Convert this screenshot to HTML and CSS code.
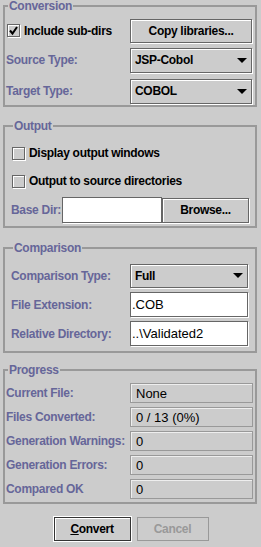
FILE: index.html
```html
<!DOCTYPE html>
<html>

<head>
    <title>Conversion</title>
    <meta charset="UTF-8">
    <link rel="stylesheet" href="styles.css">
</head>

<body>
    <div class="group conv">
        <div class="title">Conversion</div>
        <div class="rows">
            <div class="row r25">
                <label class="check"><span class="box"><svg width="11" height="11" viewBox="0 0 11 11">
                            <path d="M2 5.5 L4.5 8.5 L9 2" fill="none" stroke="#000" stroke-width="2" />
                        </svg></span>Include sub-dirs</label>
                <div class="btn">Copy libraries...</div>
            </div>
            <div class="row r26 g4">
                <span class="lbl">Source Type:</span>
                <div class="combo"><span>JSP-Cobol</span><i class="arrow"></i></div>
            </div>
            <div class="row r26 g5">
                <span class="lbl">Target Type:</span>
                <div class="combo"><span>COBOL</span><i class="arrow"></i></div>
            </div>
        </div>
    </div>

    <div class="group out">
        <div class="title">Output</div>
        <div class="rows">
            <label class="check r20"><span class="box"></span>Display output windows</label>
            <label class="check r20 g8"><span class="box"></span>Output to source directories</label>
            <div class="base r26 g6">
                <span class="lbl">Base Dir:</span>
                <div class="field"></div>
                <div class="btn">Browse...</div>
            </div>
        </div>
    </div>

    <div class="group cmp">
        <div class="title">Comparison</div>
        <div class="rows">
            <div class="row r25">
                <span class="lbl">Comparison Type:</span>
                <div class="combo"><span>Full</span><i class="arrow"></i></div>
            </div>
            <div class="row r25 g4">
                <span class="lbl">File Extension:</span>
                <div class="field">.COB</div>
            </div>
            <div class="row r25 g4">
                <span class="lbl">Relative Directory:</span>
                <div class="field">..\Validated2</div>
            </div>
        </div>
    </div>

    <div class="group prog">
        <div class="title">Progress</div>
        <div class="rows">
            <div class="row r20">
                <span class="lbl">Current File:</span>
                <div class="ro">None</div>
            </div>
            <div class="row r20 g4">
                <span class="lbl">Files Converted:</span>
                <div class="ro">0 / 13 (0%)</div>
            </div>
            <div class="row r20 g4">
                <span class="lbl">Generation Warnings:</span>
                <div class="ro">0</div>
            </div>
            <div class="row r20 g4">
                <span class="lbl">Generation Errors:</span>
                <div class="ro">0</div>
            </div>
            <div class="row r20 g4">
                <span class="lbl">Compared OK</span>
                <div class="ro">0</div>
            </div>
        </div>
    </div>

    <div class="actions">
        <div class="btn default"><u>C</u>onvert</div>
        <div class="btn off">Cancel</div>
    </div>
</body>

</html>
```

FILE: styles.css
```css
body {
    margin: 0;
    background: #cccccc;
    font-family: "Liberation Sans", Arial, sans-serif;
    font-size: 12px;
    font-weight: bold;
    /* Swing's Dialog font runs a little narrower. */
    letter-spacing: -0.3px;
    color: #000;
    width: 261px;
    height: 547px;
    overflow: hidden;
}

/* Titled border panels */
.group {
    box-sizing: border-box;
    width: 254px;
    margin-left: 3px;
    border: 2px solid #999999;
}

.title {
    width: fit-content;
    margin: -7px 0 0 2px;
    padding: 0 1px;
    height: 12px;
    line-height: 12px;
    background: #cccccc;
    color: #666699;
}

.conv {
    margin-top: 5px;
    padding: 0 3px 1px 1px;
}

.out {
    margin-top: 18px;
    padding: 0 7px 3px 6px;
}

.cmp {
    margin-top: 19px;
    padding: 0 7px 5px 6px;
}

.prog {
    margin-top: 16px;
    padding: 0 2px 3px 1px;
}

.conv .rows { margin-top: 6px; }
.out .rows { margin-top: 11px; }
.cmp .rows { margin-top: 9px; }
.prog .rows { margin-top: 7px; }

.rows {
    display: flex;
    flex-direction: column;
}

.row {
    display: grid;
    grid-template-columns: 1fr 122px;
    align-items: center;
}

.cmp .row { grid-template-columns: 1fr 118px; }
.prog .row { grid-template-columns: 1fr 123px; }

.r20 { height: 20px; }
.r25 { height: 25px; }
.r26 { height: 26px; }
.g4 { margin-top: 4px; }
.g5 { margin-top: 5px; }
.g6 { margin-top: 6px; }
.g8 { margin-top: 8px; }

.lbl {
    color: #666699;
    white-space: nowrap;
}

/* Metal look checkbox */
.check {
    display: flex;
    align-items: center;
    margin-left: 1px;
}

.box {
    box-sizing: border-box;
    width: 13px;
    height: 13px;
    margin-right: 4px;
    border: 1px solid #666666;
    box-shadow: inset 1px 1px 0 #ffffff, 1px 1px 0 #ffffff;
    display: flex;
}

/* Buttons and combos share the flush 3D border */
.btn,
.combo,
.field {
    box-sizing: border-box;
    height: 100%;
    border: 1px solid #666666;
    box-shadow: inset 1px 1px 0 #ffffff, 1px 1px 0 #ffffff;
}

.btn {
    display: flex;
    align-items: center;
    justify-content: center;
    height: calc(100% - 1px);
}

.combo {
    display: flex;
    align-items: center;
    justify-content: space-between;
    padding: 0 4px 0 4px;
    height: calc(100% - 1px);
}

.arrow {
    width: 0;
    height: 0;
    border-left: 5px solid transparent;
    border-right: 5px solid transparent;
    border-top: 5px solid #000;
}

.field {
    background: #ffffff;
    font-weight: normal;
    letter-spacing: 0;
    display: flex;
    align-items: center;
    padding-left: 1px;
    font-size: 13px;
}

.base {
    display: grid;
    grid-template-columns: 51px 100px 87px;
    align-items: center;
}

.ro {
    box-sizing: border-box;
    height: 100%;
    border: 1px solid #999999;
    box-shadow: inset 1px 1px 0 #eeeeee;
    font-weight: normal;
    letter-spacing: 0;
    font-size: 13px;
    display: flex;
    align-items: center;
    padding-left: 5px;
}

.actions {
    display: flex;
    justify-content: center;
    gap: 6px;
    margin: 13px 0 0 1px;
}

.actions .btn {
    height: 24px;
}

.default {
    width: 77px;
    border-color: #333333;
    box-shadow: inset 1px 1px 0 #ffffff, 0 0 0 1px #ffffff;
}

.off {
    width: 72px;
    color: #999999;
    border-color: #999999;
    box-shadow: none;
}
```
